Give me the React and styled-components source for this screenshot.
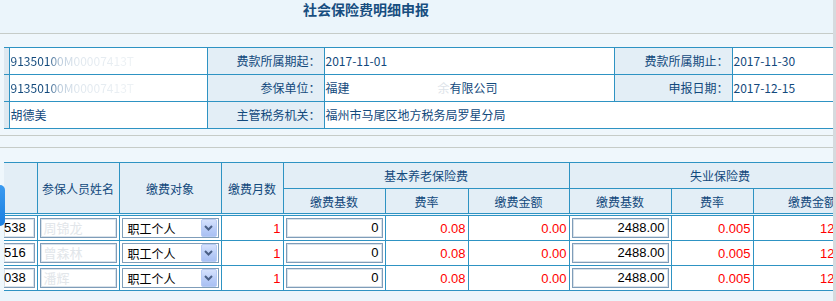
import React from 'react';
import styled, { createGlobalStyle } from 'styled-components';

const GlobalStyle = createGlobalStyle`
  html, body {
    margin: 0;
    padding: 0;
  }
  body {
    background: #ebf5fb;
    font-family: "Noto Sans CJK SC", "Noto Sans", sans-serif;
    font-size: 12px;
  }
`;

const ink = '#12497c';
const line = '#2e93c3';

const Page = styled.div`
  position: relative;
  width: 836px;
  height: 301px;
  overflow: hidden;
  background: #ebf5fb;
`;

const TitleBar = styled.div`
  height: 34px;
  box-sizing: border-box;
  border-bottom: 1px solid #c6ccc8;
  padding: 1px 0 0 303px;
`;

const Title = styled.h1`
  margin: 0;
  font-size: 14px;
  line-height: 17px;
  font-weight: bold;
  color: #174e80;
`;

const Section = styled.div`
  background: #eff7fc;
  padding-top: ${(p) => p.$top}px;
`;

const Rule = styled.div`
  height: 1px;
  background: #c6ccc8;
  margin-top: ${(p) => p.$gap}px;
`;

const InfoTable = styled.table`
  margin-left: 4px;
  width: 829px;
  border-collapse: collapse;
  table-layout: fixed;
`;

const InfoCell = styled.td`
  height: 26px;
  padding: ${(p) => (p.$label ? '0 3px' : '0 1px')};
  border: 1px solid ${line};
  background: ${(p) => (p.$label ? '#e3eef6' : '#fff')};
  text-align: ${(p) => (p.$label ? 'right' : 'left')};
  color: ${ink};
  white-space: nowrap;
  overflow: hidden;
  line-height: 16px;
`;

const EdgeCell = styled.td`
  padding: 0;
  border: 1px solid ${line};
  border-left: none;
  background: #dde8f0;
`;

const Faded = styled.span`
  background: linear-gradient(90deg, ${ink} 0, ${ink} 30%, #b9cadb 40%, #dfe7ee 55%, #eef2f5 100%);
  -webkit-background-clip: text;
  background-clip: text;
  color: transparent;
`;

const Hidden = styled.span`
  display: inline-block;
  width: ${(p) => p.$w}px;
`;

const Ghost = styled.span`
  color: #dde3e9;
`;

const DataTable = styled.table`
  margin-left: 4px;
  width: 867px;
  border-collapse: collapse;
  table-layout: fixed;
`;

const Head = styled.th`
  height: ${(p) => p.$h}px;
  padding: 0;
  font-weight: normal;
  color: ${ink};
  background: #e3eef6;
  border: 1px solid ${line};
  border-left: ${(p) => (p.$first ? 'none' : `1px solid ${line}`)};
  border-bottom: ${(p) => (p.$double ? `3px double ${line}` : `1px solid ${line}`)};
  white-space: nowrap;
  overflow: hidden;
`;

const Cell = styled.td`
  height: 24px;
  padding: 0 2px;
  border: 1px solid ${line};
  border-left: ${(p) => (p.$first ? 'none' : `1px solid ${line}`)};
  background: #fff;
  text-align: right;
  font-family: "Liberation Sans", Arial, sans-serif;
  font-size: 13px;
  color: #ff0000;
  white-space: nowrap;
  overflow: hidden;
`;

const Box = styled.div`
  height: 20px;
  box-sizing: border-box;
  border: 1px solid #7f9db9;
  box-shadow: inset 0 0 0 1px #d9e2ea;
  background: #fff;
  padding: 0 3px;
  line-height: 18px;
  font-size: 13px;
  color: ${(p) => (p.$ghost ? '#e2e6ea' : '#000')};
  text-align: ${(p) => (p.$left ? 'left' : 'right')};
  font-family: ${(p) =>
    p.$cjk ? '"Noto Sans CJK SC", sans-serif' : '"Liberation Sans", Arial, sans-serif'};
  ${(p) => p.$cut && 'border-left: none; margin-left: -2px; padding-left: 0;'}
`;

const Select = styled.div`
  display: flex;
  align-items: center;
  justify-content: space-between;
  height: 20px;
  box-sizing: border-box;
  border: 1px solid #7f9db9;
  background: #fff;
  padding: 0 1px 0 5px;
  color: #000;
  font-family: "Noto Sans CJK SC", sans-serif;
  font-size: 12px;
  text-align: left;
`;

const DropButton = styled.span`
  display: flex;
  align-items: center;
  justify-content: center;
  width: 14px;
  height: 16px;
  border-radius: 2px;
  border: 1px solid #b8cbf4;
  background: linear-gradient(180deg, #d6e2fd 0%, #b7cbf7 60%, #a9c0f3 100%);
`;

const SideTab = styled.div`
  position: absolute;
  left: 0;
  top: 185px;
  width: 5px;
  height: 41px;
  border-radius: 0 5px 5px 0;
  background: linear-gradient(180deg, #3a9af0, #1b7fe0);
`;

const RightEdge = styled.div`
  position: absolute;
  top: 0;
  right: 0;
  width: 3px;
  height: 100%;
  background: #d6dade;
`;

const Chevron = () => (
  <svg width="9" height="6" viewBox="0 0 9 6">
    <path d="M1 1 L4.5 4.5 L8 1" fill="none" stroke="#4a5f86" strokeWidth="2" />
  </svg>
);

const rows = [
  { id: '538', name: '周锦龙' },
  { id: '516', name: '曾森林' },
  { id: '038', name: '潘辉' },
];

function App() {
  return (
    <Page>
      <GlobalStyle />
      <TitleBar>
        <Title>社会保险费明细申报</Title>
      </TitleBar>

      <Section $top={13}>
        <InfoTable>
          <colgroup>
            <col width="5" />
            <col width="198" />
            <col width="117" />
            <col width="290" />
            <col width="118" />
            <col width="101" />
          </colgroup>
          <tbody>
            <tr>
              <EdgeCell />
              <InfoCell>
                <Faded>91350100M00007413T</Faded>
              </InfoCell>
              <InfoCell $label>费款所属期起：</InfoCell>
              <InfoCell>2017-11-01</InfoCell>
              <InfoCell $label>费款所属期止：</InfoCell>
              <InfoCell>2017-11-30</InfoCell>
            </tr>
            <tr>
              <EdgeCell />
              <InfoCell>
                <Faded>91350100M00007413T</Faded>
              </InfoCell>
              <InfoCell $label>参保单位：</InfoCell>
              <InfoCell>
                福建<Hidden $w={88} />
                <Ghost>余</Ghost>有限公司
              </InfoCell>
              <InfoCell $label>申报日期：</InfoCell>
              <InfoCell>2017-12-15</InfoCell>
            </tr>
            <tr>
              <EdgeCell />
              <InfoCell>胡德美</InfoCell>
              <InfoCell $label>主管税务机关：</InfoCell>
              <InfoCell colSpan={3}>福州市马尾区地方税务局罗星分局</InfoCell>
            </tr>
          </tbody>
        </InfoTable>
        <Rule $gap={6} />
        <Rule $gap={11} />
      </Section>

      <Section $top={14}>
        <DataTable>
          <colgroup>
            <col width="33" />
            <col width="82" />
            <col width="102" />
            <col width="62" />
            <col width="102" />
            <col width="83" />
            <col width="101" />
            <col width="102" />
            <col width="82" />
            <col width="118" />
          </colgroup>
          <thead>
            <tr>
              <Head $h={25} $first rowSpan={2} $double />
              <Head $h={25} rowSpan={2} $double>参保人员姓名</Head>
              <Head $h={25} rowSpan={2} $double>缴费对象</Head>
              <Head $h={25} rowSpan={2} $double>缴费月数</Head>
              <Head $h={25} colSpan={3}>基本养老保险费</Head>
              <Head $h={25} colSpan={3}>失业保险费</Head>
            </tr>
            <tr>
              <Head $h={24} $double>缴费基数</Head>
              <Head $h={24} $double>费率</Head>
              <Head $h={24} $double>缴费金额</Head>
              <Head $h={24} $double>缴费基数</Head>
              <Head $h={24} $double>费率</Head>
              <Head $h={24} $double>缴费金额</Head>
            </tr>
          </thead>
          <tbody>
            {rows.map((r) => (
              <tr key={r.id}>
                <Cell $first>
                  <Box $left $cut>{r.id}</Box>
                </Cell>
                <Cell>
                  <Box $left $ghost $cjk>{r.name}</Box>
                </Cell>
                <Cell>
                  <Select>
                    职工个人
                    <DropButton>
                      <Chevron />
                    </DropButton>
                  </Select>
                </Cell>
                <Cell>1</Cell>
                <Cell>
                  <Box>0</Box>
                </Cell>
                <Cell>0.08</Cell>
                <Cell>0.00</Cell>
                <Cell>
                  <Box>2488.00</Box>
                </Cell>
                <Cell>0.005</Cell>
                <Cell style={{ paddingRight: 18 }}>12.44</Cell>
              </tr>
            ))}
          </tbody>
        </DataTable>
      </Section>

      <SideTab />
      <RightEdge />
    </Page>
  );
}

export default App;
